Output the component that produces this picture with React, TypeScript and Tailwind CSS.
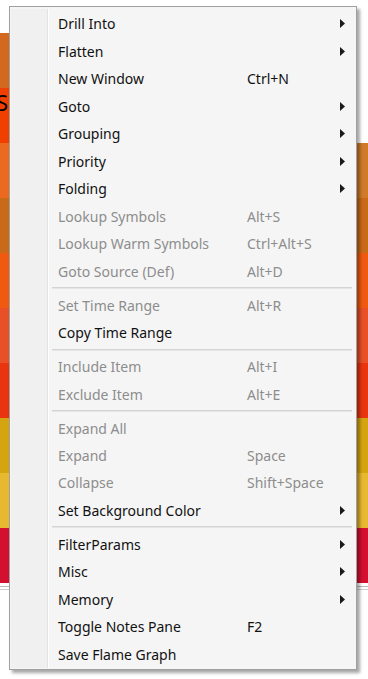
import React from "react";

type Item =
  | { sep: true }
  | { sep?: false; label: string; shortcut?: string; sub?: boolean; disabled?: boolean };

const items: Item[] = [
  { label: "Drill Into", sub: true },
  { label: "Flatten", sub: true },
  { label: "New Window", shortcut: "Ctrl+N" },
  { label: "Goto", sub: true },
  { label: "Grouping", sub: true },
  { label: "Priority", sub: true },
  { label: "Folding", sub: true },
  { label: "Lookup Symbols", shortcut: "Alt+S", disabled: true },
  { label: "Lookup Warm Symbols", shortcut: "Ctrl+Alt+S", disabled: true },
  { label: "Goto Source (Def)", shortcut: "Alt+D", disabled: true },
  { sep: true },
  { label: "Set Time Range", shortcut: "Alt+R", disabled: true },
  { label: "Copy Time Range" },
  { sep: true },
  { label: "Include Item", shortcut: "Alt+I", disabled: true },
  { label: "Exclude Item", shortcut: "Alt+E", disabled: true },
  { sep: true },
  { label: "Expand All", disabled: true },
  { label: "Expand", shortcut: "Space", disabled: true },
  { label: "Collapse", shortcut: "Shift+Space", disabled: true },
  { label: "Set Background Color", sub: true },
  { sep: true },
  { label: "FilterParams", sub: true },
  { label: "Misc", sub: true },
  { label: "Memory", sub: true },
  { label: "Toggle Notes Pane", shortcut: "F2" },
  { label: "Save Flame Graph" },
];

const bands: { h: string; l: string; r: string }[] = [
  { h: "h-[33px]", l: "bg-white", r: "bg-white" },
  { h: "h-[55px]", l: "bg-[#d2691e]", r: "bg-white" },
  { h: "h-[55px]", l: "bg-[#f04000]", r: "bg-white" },
  { h: "h-[55px]", l: "bg-[#ec6a20]", r: "bg-[#d07a2a]" },
  { h: "h-[55px]", l: "bg-[#c86a18]", r: "bg-[#c86a18]" },
  { h: "h-[55px]", l: "bg-[#f05a10]", r: "bg-[#f05a10]" },
  { h: "h-[55px]", l: "bg-[#e85028]", r: "bg-[#e85028]" },
  { h: "h-[55px]", l: "bg-[#e83510]", r: "bg-[#e83510]" },
  { h: "h-[55px]", l: "bg-[#d4a510]", r: "bg-[#d4a510]" },
  { h: "h-[55px]", l: "bg-[#e8b830]", r: "bg-[#e8b830]" },
  { h: "h-[55px]", l: "bg-[#d41030]", r: "bg-[#d41030]" },
];

function Arrow() {
  return (
    <svg width="5" height="9" viewBox="0 0 5 9" className="block">
      <path d="M0 0 L5 4.5 L0 9 Z" fill="#1a1a1a" />
    </svg>
  );
}

export default function App() {
  return (
    <div
      className="relative w-[368px] h-[679px] overflow-hidden bg-white"
      style={{ fontFamily: '"Noto Sans", "Open Sans", sans-serif' }}
    >
      {/* flame graph background */}
      <div className="flex flex-col">
        {bands.map((b, i) => (
          <div key={i} className={`flex ${b.h}`}>
            <div className={`flex-1 ${b.l} overflow-hidden relative`}>
              {i === 2 && (
                <span className="absolute left-[-4px] top-[1px] text-[22px] leading-[26px] text-black">
                  S.
                </span>
              )}
            </div>
            <div className={`flex-1 ${b.r}`} />
          </div>
        ))}
        <div className="h-[3px]" />
        <div className="h-px bg-[#b8b8b8]" />
        <div className="h-[2px]" />
        <div className="h-px bg-[#cfcfcf]" />
      </div>

      {/* context menu */}
      <div className="absolute left-[9px] top-[6px] w-[348px] h-[664px] border border-[#a0a0a0] bg-[#f5f5f5] shadow-[3px_3px_3px_rgba(0,0,0,0.35)] flex p-[1px]">
        <div className="relative flex-1 flex flex-col pt-[2px]">
          <div className="absolute left-0 top-[1px] bottom-0 w-[37px] bg-[#f0f0f0] border-r border-[#e2e3e3]" />
          <div className="absolute left-[37px] top-[1px] bottom-0 w-px bg-white" />
          {items.map((it, i) =>
            it.sep ? (
              <div key={i} className="relative h-[6.5px] flex items-center pl-[41px] pr-[3px]">
                <div className="w-full h-[2px] border-t border-[#d4d4d4] border-b border-b-[#e6e6e6]" />
              </div>
            ) : (
              <div
                key={i}
                className={`relative h-[27.5px] flex items-center text-[14px] ${
                  it.disabled ? "text-[#8d8d8d]" : "text-[#111111]"
                }`}
              >
                <span className="absolute left-[47px] whitespace-nowrap">{it.label}</span>
                {it.shortcut && (
                  <span className="absolute left-[236px] whitespace-nowrap">{it.shortcut}</span>
                )}
                {it.sub && (
                  <span className="absolute left-[329px]">
                    <Arrow />
                  </span>
                )}
              </div>
            )
          )}
        </div>
      </div>
    </div>
  );
}
